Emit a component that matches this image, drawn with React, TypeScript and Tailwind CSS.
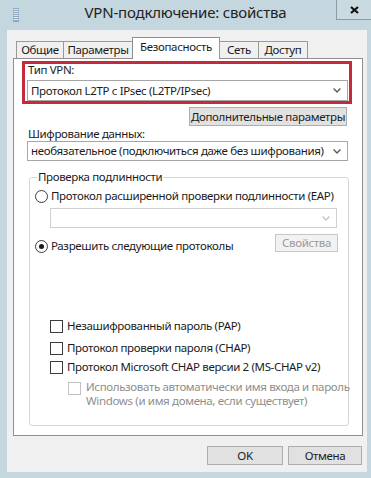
import clsx from 'clsx'

function Chevron({ disabled }: { disabled?: boolean }) {
  return (
    <svg width="8" height="5" viewBox="0 0 8 5" className="shrink-0">
      <path
        d="M0.6 0.6 L4 4 L7.4 0.6"
        fill="none"
        stroke={disabled ? '#c4c4c4' : '#5a5a5a'}
        strokeWidth="1.4"
      />
    </svg>
  )
}

function Select({ text, disabled, className }: { text?: string; disabled?: boolean; className?: string }) {
  return (
    <div
      className={clsx(
        'flex items-center bg-white border pl-[3px] pr-[6px]',
        disabled ? 'border-[#d0d0d0]' : 'border-[#a6a6a6]',
        className
      )}
    >
      <span className="flex-1 whitespace-nowrap overflow-hidden">{text}</span>
      <Chevron disabled={disabled} />
    </div>
  )
}

function Btn({ children, disabled, className }: { children: React.ReactNode; disabled?: boolean; className?: string }) {
  return (
    <div
      className={clsx(
        'flex items-center justify-center border whitespace-nowrap',
        disabled ? 'border-[#c6c6c6] bg-[#f2f2f2] text-[#9a9a9a]' : 'border-[#adadad] bg-[#e1e1e1]',
        className
      )}
    >
      {children}
    </div>
  )
}

function Radio({ checked }: { checked?: boolean }) {
  return (
    <span className="w-[13px] h-[13px] rounded-full border border-[#3c3c3c] bg-white flex items-center justify-center shrink-0">
      {checked && <span className="w-[5px] h-[5px] rounded-full bg-[#1a1a1a]" />}
    </span>
  )
}

function Check({ disabled }: { disabled?: boolean }) {
  return (
    <span
      className={clsx(
        'block w-[13px] h-[13px] border bg-white shrink-0',
        disabled ? 'border-[#c2c2c2]' : 'border-[#3c3c3c]'
      )}
    />
  )
}

function TitleBar() {
  return (
    <div className="h-[30px] flex items-start">
      <div className="w-[35px] pl-[13px] pt-[8px]">
        {/* window icon */}
        <svg width="6" height="14" viewBox="0 0 6 14">
          <rect x="0" y="0" width="6" height="14" fill="#8fa9bf" />
          {[1, 3, 5, 7, 9, 11].map((y) => (
            <rect key={y} x="0.5" y={y} width="5" height="1" fill="#d9e4ee" />
          ))}
        </svg>
      </div>
      <div className="flex-1 text-center text-[15px] tracking-[-0.2px] leading-[20px] pt-[2px] text-[#222]">
        VPN-подключение: свойства
      </div>
      <div className="w-[35px] h-[20px] border-l border-b border-[#8b9ca5] bg-[#c9dae1] flex items-center justify-center">
        <svg width="9" height="8" viewBox="0 0 9 8">
          <path d="M1 1 L8 7 M8 1 L1 7" stroke="#111" strokeWidth="2.2" />
        </svg>
      </div>
    </div>
  )
}

const tabs = [
  { label: 'Общие', w: 'w-[48px]' },
  { label: 'Параметры', w: 'w-[70px]' },
  { label: 'Безопасность', w: 'w-[88px]', active: true },
  { label: 'Сеть', w: 'w-[40px]' },
  { label: 'Доступ', w: 'w-[50px]' },
]

function Tabs() {
  return (
    <div className="mt-[7px] h-[21px] ml-[10px] flex items-end relative z-10">
      {tabs.map((t) =>
        t.active ? (
          <div
            key={t.label}
            className={clsx(
              t.w,
              'h-[22px] -mb-px -ml-px bg-white border border-b-0 border-[#8f8f8f] flex justify-center pt-[2px] leading-[14px]'
            )}
          >
            {t.label}
          </div>
        ) : (
          <div
            key={t.label}
            className={clsx(
              t.w,
              'h-[17px] -ml-px bg-[#f0f0f0] border border-b-0 border-[#9a9a9a] flex justify-center pt-[1px] leading-[14px]'
            )}
          >
            {t.label}
          </div>
        )
      )}
    </div>
  )
}

function Panel() {
  return (
    <div className="ml-[6px] w-[350px] h-[378px] border border-[#8f8f8f] bg-white flex flex-col">
      <div className="mt-[2px] ml-[8px] w-[330px] h-[43px] border-[3px] border-[#c42a3b] flex flex-col">
        <div className="pl-[3px] leading-[12px]">Тип VPN:</div>
        <Select
          text="Протокол L2TP с IPsec (L2TP/IPsec)"
          className="mt-[4px] ml-[2px] mr-[1px] h-[21px]"
        />
      </div>
      <Btn className="mt-[3px] self-end mr-[15px] w-[158px] h-[19px]">Дополнительные параметры</Btn>
      <div className="mt-[1px] ml-[14px] leading-[14px]">Шифрование данных:</div>
      <Select
        text="необязательное (подключиться даже без шифрования)"
        className="ml-[13px] w-[321px] h-[20px]"
      />
      <fieldset className="mt-[10px] ml-[15px] w-[320px] min-w-0 border border-[#d7d7d7] rounded-[3px] pb-[17px]">
        <legend className="ml-[7px] px-[1px] leading-[12px]">Проверка подлинности</legend>
        <div className="mt-[7px] pl-[5px] h-[12px] flex items-center gap-[3px]">
          <Radio />
          <span className="whitespace-nowrap">Протокол расширенной проверки подлинности (EAP)</span>
        </div>
        <Select disabled className="mt-[6px] ml-[20px] w-[287px] h-[20px]" />
        <div className="mt-[6px] flex justify-between">
          <div className="mt-[6px] pl-[5px] h-[12px] flex items-center gap-[3px]">
            <Radio checked />
            <span>Разрешить следующие протоколы</span>
          </div>
          <Btn disabled className="w-[63px] h-[18px] mr-[10px]">Свойства</Btn>
        </div>
        <div className="mt-[68px] pl-[20px] h-[12px] flex items-center gap-[4px]">
          <Check />
          <span className="whitespace-nowrap">Незашифрованный пароль (PAP)</span>
        </div>
        <div className="mt-[10px] pl-[20px] h-[12px] flex items-center gap-[4px]">
          <Check />
          <span className="whitespace-nowrap">Протокол проверки пароля (CHAP)</span>
        </div>
        <div className="mt-[7px] pl-[20px] h-[12px] flex items-center gap-[4px]">
          <Check />
          <span className="whitespace-nowrap">Протокол Microsoft CHAP версии 2 (MS-CHAP v2)</span>
        </div>
        <div className="mt-[7px] pl-[38px] flex items-start gap-[5px] text-[#8e8e8e]">
          <span className="mt-[2px]">
            <Check disabled />
          </span>
          <div className="leading-[14px]">
            <div className="whitespace-nowrap">Использовать автоматически имя входа и пароль</div>
            <div className="whitespace-nowrap">Windows (и имя домена, если существует)</div>
          </div>
        </div>
      </fieldset>
    </div>
  )
}

export default function App() {
  return (
    <div className="w-[371px] h-[478px] bg-[#c4d7df] flex flex-col overflow-hidden font-['Noto_Sans',sans-serif] text-[11.5px] tracking-[-0.35px] text-[#1b1b1b]">
      <TitleBar />
      <div className="ml-[7px] mr-[4px] mb-[6px] flex-1 bg-[#f0f0f0] flex flex-col">
        <Tabs />
        <Panel />
        <div className="mt-[10px] pr-[5px] flex justify-end gap-[5px]">
          <Btn className="w-[76px] h-[19px]">OK</Btn>
          <Btn className="w-[74px] h-[19px]">Отмена</Btn>
        </div>
      </div>
    </div>
  )
}
